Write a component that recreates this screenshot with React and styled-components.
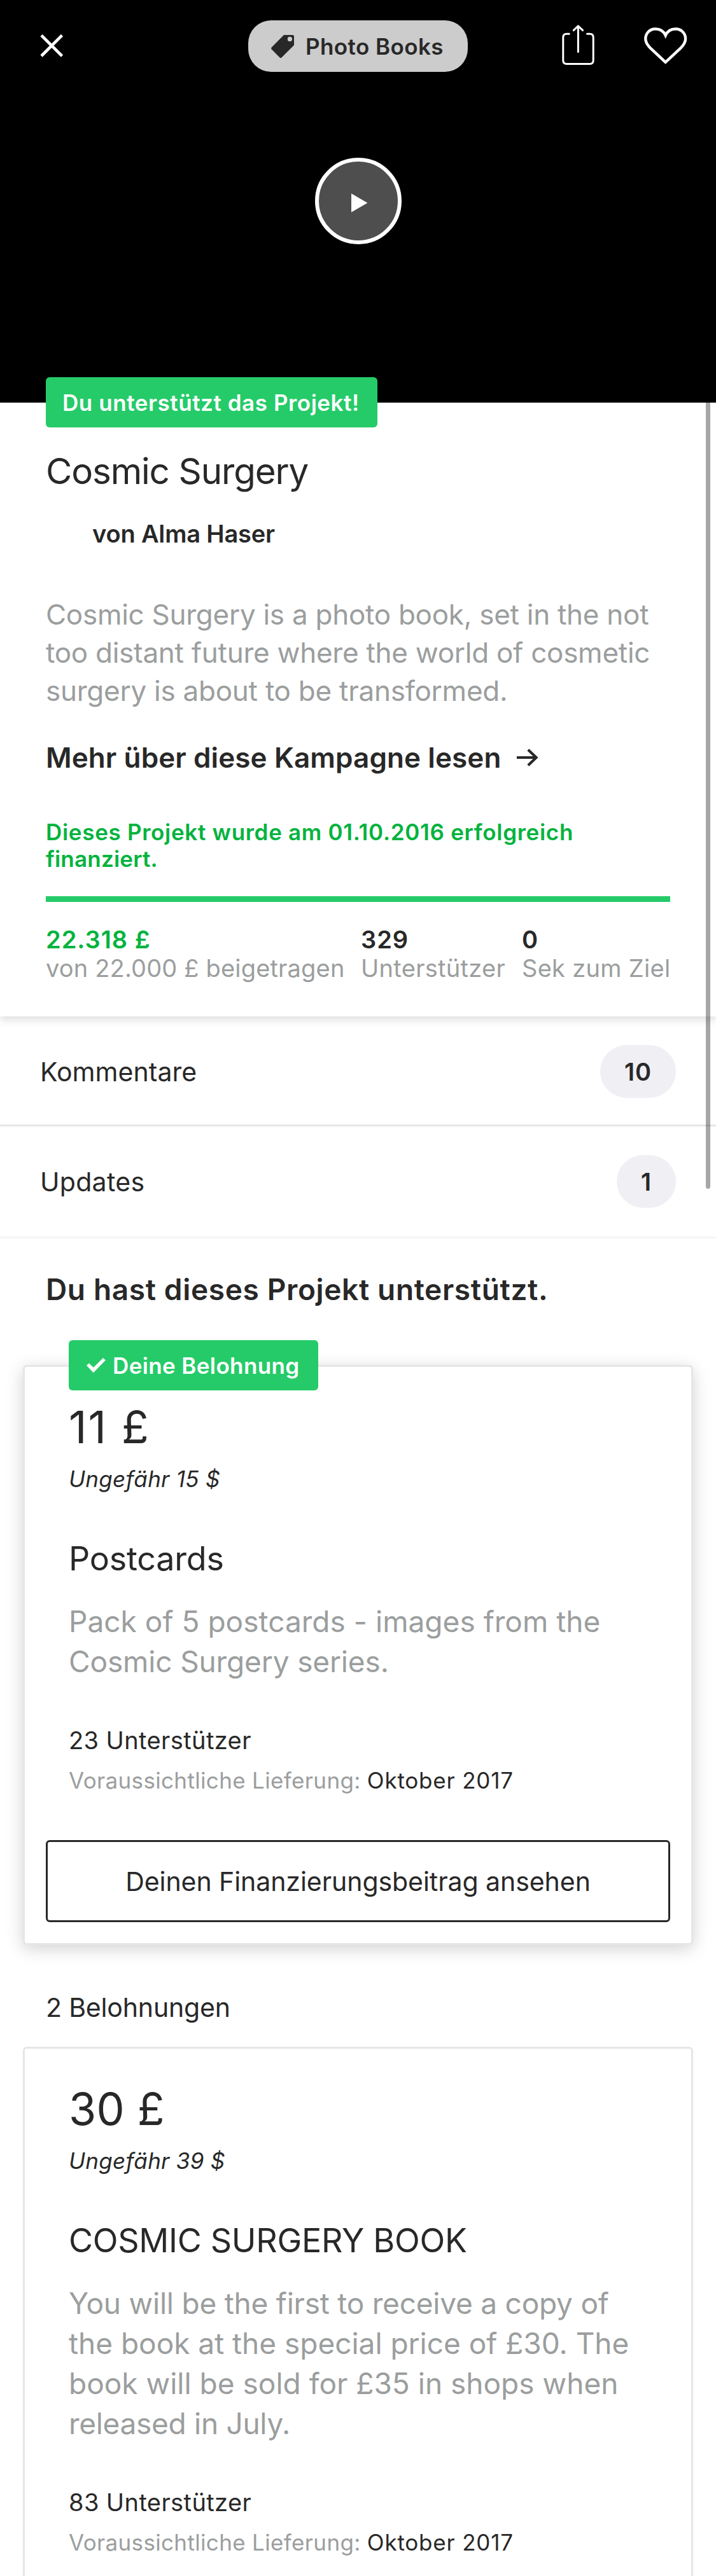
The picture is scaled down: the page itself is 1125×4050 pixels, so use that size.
import React from "react";
import styled, { createGlobalStyle } from "styled-components";

const ink = "#282828";
const muted = "#9b9e9e";
const green = "#25cb68";
const greenText = "#03b33e";
const rule = "#e6e6e6";

const GlobalStyle = createGlobalStyle`
  *, *::before, *::after { box-sizing: border-box; }
  body {
    margin: 0;
    background: #fff;
    color: ${ink};
    font-family: Inter, "Liberation Sans", sans-serif;
  }
  h1, h2, h3, p { margin: 0; font-weight: 400; }
  button { font: inherit; color: inherit; border: 0; background: none; padding: 0; }
  svg { display: block; flex: none; }
`;

const Page = styled.main`
  position: relative;
  width: 1125px;
  height: 4050px;
  overflow: hidden;
  background: #fff;
`;

const ScrollThumb = styled.div`
  position: absolute;
  z-index: 5;
  top: 600px;
  right: 9px;
  width: 7px;
  height: 1269px;
  border-radius: 4px;
  background: rgba(0, 0, 0, 0.35);
`;

/* Hero */
const Hero = styled.header`
  display: flex;
  flex-direction: column;
  height: 633px;
  background: #000;
`;

const TopBar = styled.nav`
  display: grid;
  grid-template-columns: 1fr auto 1fr;
  align-items: center;
  height: 113px;
  padding: 32px 45px 0 63px;
`;

const CloseButton = styled.button`
  justify-self: start;
`;

const Category = styled.div`
  display: flex;
  align-items: center;
  gap: 18px;
  width: 345px;
  height: 81px;
  margin-left: -18px;
  padding-left: 36px;
  border-radius: 36px;
  background: #ccc;
  font-size: 35px;
  font-weight: 600;
  letter-spacing: 0.42px;
  white-space: nowrap;
`;

const Actions = styled.div`
  display: flex;
  justify-content: flex-end;
  align-items: center;
  gap: 77px;
`;

const PlayButton = styled.button`
  align-self: center;
  width: 136px;
  height: 136px;
  margin-top: 135px;
  border: 6px solid #fff;
  border-radius: 50%;
  background: #4e4e4e;
`;

/* Shared */
const Badge = styled.div`
  display: flex;
  align-items: center;
  gap: 11px;
  height: 79px;
  border-radius: 6px;
  background: ${green};
  color: #fff;
  font-size: 35px;
  font-weight: 600;
  white-space: nowrap;
`;

const Line = styled.span`
  display: block;
  white-space: nowrap;
  letter-spacing: ${(p) => p.$track || 0}px;
`;

/* Project info */
const Info = styled.section`
  display: flow-root;
  position: relative;
  z-index: 1;
  height: 965px;
  padding: 0 72px;
  background: #fff;
  box-shadow: 0 6px 12px rgba(0, 0, 0, 0.13);
`;

const BackedBadge = styled(Badge)`
  width: 521px;
  margin-top: -40px;
  padding-left: 26px;
  letter-spacing: 0.56px;
`;

const Title = styled.h1`
  margin-top: 34px;
  font-size: 56.5px;
  line-height: 70px;
  letter-spacing: -1.11px;
`;

const Author = styled.p`
  margin-top: 40px;
  padding-left: 73px;
  font-size: 38px;
  font-weight: 600;
  line-height: 46px;
  letter-spacing: -0.17px;
`;

const Blurb = styled.p`
  margin-top: 74px;
  color: ${muted};
  font-size: 44px;
  line-height: 60px;
`;

const MoreLink = styled.p`
  display: flex;
  align-items: center;
  gap: 24px;
  margin-top: 48px;
  font-size: 44px;
  font-weight: 600;
  line-height: 54px;
  letter-spacing: 0.1px;
`;

const Status = styled.p`
  margin-top: 69px;
  color: ${greenText};
  font-size: 35px;
  font-weight: 600;
  line-height: 42px;
`;

const Progress = styled.div`
  height: 9px;
  margin-top: 38px;
  background: ${green};
`;

const Stats = styled.div`
  display: grid;
  grid-template-columns: 495px 253px auto;
  margin-top: 36px;
  font-size: 38px;
  white-space: nowrap;
`;

const StatValue = styled.div`
  color: ${(p) => (p.$green ? greenText : ink)};
  font-weight: 600;
  line-height: 46px;
  letter-spacing: 1px;
`;

const StatLabel = styled.div`
  color: ${muted};
  line-height: 45px;
  letter-spacing: ${(p) => p.$track}px;
`;

/* Link rows */
const Row = styled.div`
  display: flex;
  justify-content: space-between;
  align-items: center;
  padding: 45px 63px ${(p) => p.$bottom}px;
  border-bottom: 3px solid ${(p) => p.$line};
  font-size: 41px;
`;

const Count = styled.span`
  display: flex;
  justify-content: center;
  align-items: center;
  min-width: 92px;
  height: 83px;
  padding: 0 38px;
  border-radius: 42px;
  background: #efeff4;
  font-size: 38px;
  font-weight: 600;
  letter-spacing: 0.9px;
`;

/* Rewards */
const Rewards = styled.section`
  display: flow-root;
`;

const Heading = styled.h2`
  margin: 52px 72px 0;
  font-size: 46px;
  font-weight: 600;
  line-height: 56px;
  letter-spacing: 0.65px;
`;

const Subheading = styled.p`
  margin: 73px 72px 37px;
  font-size: 41px;
  line-height: 50px;
  letter-spacing: -0.17px;
`;

const Card = styled.article`
  position: relative;
  display: flow-root;
  margin: ${(p) => (p.$raised ? "91px" : "0")} 36px 0;
  padding: 52px 33px ${(p) => (p.$raised ? 33 : 72)}px;
  border: 3px solid ${rule};
  border-radius: 6px;
  background: #fff;
  box-shadow: ${(p) => (p.$raised ? "0 6px 27px rgba(0, 0, 0, 0.18)" : "none")};
`;

const RewardBadge = styled(Badge)`
  position: absolute;
  top: -42px;
  left: 69px;
  width: 392px;
  padding-left: 28px;
  letter-spacing: 0.38px;
`;

const CardBody = styled.div`
  padding: 0 36px;
`;

const Price = styled.p`
  font-size: 70px;
  line-height: 85px;
  letter-spacing: ${(p) => p.$track}px;
`;

const Approx = styled.p`
  margin-top: 18px;
  font-size: 35px;
  font-style: italic;
  line-height: 42px;
  letter-spacing: 0.3px;
`;

const RewardTitle = styled.h3`
  margin-top: 73px;
  font-size: 52px;
  line-height: 64px;
  letter-spacing: ${(p) => p.$track}px;
`;

const RewardText = styled.p`
  margin-top: 35px;
  color: ${muted};
  font-size: 46px;
  line-height: 63px;
`;

const Backers = styled.p`
  margin-top: 69px;
  font-size: 38px;
  line-height: 46px;
  letter-spacing: 0.4px;
`;

const Delivery = styled.p`
  margin-top: 19px;
  color: ${muted};
  font-size: 35px;
  line-height: 42px;
  letter-spacing: 0.34px;
  white-space: nowrap;

  span {
    color: ${ink};
    letter-spacing: 0.81px;
  }
`;

const PledgeButton = styled.button`
  display: flex;
  justify-content: center;
  align-items: center;
  width: 100%;
  height: 129px;
  margin-top: 73px;
  border: 3px solid ${ink};
  border-radius: 6px;
  font-size: 41px;
  letter-spacing: -0.06px;
`;

const CloseIcon = () => (
  <svg width="36" height="37" viewBox="0 0 36 37" fill="none" stroke="#fff" strokeWidth="4.6">
    <path d="M2 1.5L34.5 34M34.5 1.5L2 34" />
  </svg>
);

const TagIcon = () => (
  <svg width="36" height="36" viewBox="0 0 36 36">
    <path fill={ink} d="M20 0H33.5Q36 0 36 2.5V16L16.4 35.4Q15 36.6 13.6 35.4L.7 22.5Q-.5 21 .7 19.6Z" />
    <circle cx="29.4" cy="6.4" r="3.6" fill="#ccc" />
  </svg>
);

const ShareIcon = () => (
  <svg width="54" height="69" viewBox="0 0 54 69" fill="none" stroke="#fff" strokeWidth="3" strokeLinecap="round" strokeLinejoin="round">
    <path d="M13.3 15.3H9.5Q3.8 15.3 3.8 21V57Q3.8 62.5 9.5 62.5H45.6Q51.2 62.5 51.2 57V21Q51.2 15.3 45.6 15.3H41.5" />
    <path d="M27.4 3V43.5M20.3 9.7L27.4 2.8L34.6 9.7" />
  </svg>
);

const HeartIcon = () => (
  <svg width="68" height="60" viewBox="0 0 68 60" fill="none" stroke="#fff" strokeWidth="4.4">
    <path d="M33.7 54.8L10.5 33.2C5 27.8 2.3 23.2 2.3 18C2.3 9.2 9 2.5 17.8 2.5C25.2 2.5 31 6.6 33.7 12.6C36.4 6.6 42.2 2.5 49.6 2.5C58.4 2.5 65.1 9.2 65.1 18C65.1 23.2 62.4 27.8 56.9 33.2Z" />
  </svg>
);

const PlayIcon = () => (
  <svg width="124" height="124" viewBox="0 0 124 124" fill="#fff">
    <path d="M51 50.2L76.4 65L51 79.8Z" />
  </svg>
);

const ArrowIcon = () => (
  <svg width="34" height="28" viewBox="0 0 34 28" fill="none" stroke={ink} strokeWidth="4.2">
    <path d="M0 14H31M17.8 1.8L30.6 14L17.8 26.2" />
  </svg>
);

const CheckIcon = () => (
  <svg width="30" height="24" viewBox="0 0 30 24" fill="#fff">
    <path d="M0 11.8L3.8 8.2L10.8 15L26 0L29.8 3.4L10.8 23.2Z" />
  </svg>
);

const rewards = [
  {
    price: "11 £",
    priceTrack: 2.1,
    approx: "Ungefähr 15 $",
    title: "Postcards",
    titleTrack: -0.2,
    text: [
      ["Pack of 5 postcards - images from the", 0.03],
      ["Cosmic Surgery series.", -0.14],
    ],
    backers: "23 Unterstützer",
    mine: true,
  },
  {
    price: "30 £",
    priceTrack: 0.24,
    approx: "Ungefähr 39 $",
    title: "COSMIC SURGERY BOOK",
    titleTrack: -0.27,
    text: [
      ["You will be the first to receive a copy of", -0.22],
      ["the book at the special price of £30. The", -0.02],
      ["book will be sold for £35 in shops when", 0.01],
      ["released in July.", -0.3],
    ],
    backers: "83 Unterstützer",
    mine: false,
  },
];

function Reward({ reward }) {
  return (
    <Card $raised={reward.mine}>
      {reward.mine && (
        <RewardBadge>
          <CheckIcon />
          Deine Belohnung
        </RewardBadge>
      )}
      <CardBody>
        <Price $track={reward.priceTrack}>{reward.price}</Price>
        <Approx>{reward.approx}</Approx>
        <RewardTitle $track={reward.titleTrack}>{reward.title}</RewardTitle>
        <RewardText>
          {reward.text.map(([line, track]) => (
            <Line key={line} $track={track}>{line}</Line>
          ))}
        </RewardText>
        <Backers>{reward.backers}</Backers>
        <Delivery>
          Voraussichtliche Lieferung: <span>Oktober 2017</span>
        </Delivery>
      </CardBody>
      {reward.mine && <PledgeButton>Deinen Finanzierungsbeitrag ansehen</PledgeButton>}
    </Card>
  );
}

export default function App() {
  return (
    <>
      <GlobalStyle />
      <Page>
        <Hero>
          <TopBar>
            <CloseButton aria-label="Schließen"><CloseIcon /></CloseButton>
            <Category>
              <TagIcon />
              Photo Books
            </Category>
            <Actions>
              <ShareIcon />
              <HeartIcon />
            </Actions>
          </TopBar>
          <PlayButton aria-label="Abspielen"><PlayIcon /></PlayButton>
        </Hero>

        <Info>
          <BackedBadge>Du unterstützt das Projekt!</BackedBadge>
          <Title>Cosmic Surgery</Title>
          <Author>von Alma Haser</Author>
          <Blurb>
            <Line $track={-0.27}>Cosmic Surgery is a photo book, set in the not</Line>
            <Line $track={-0.27}>too distant future where the world of cosmetic</Line>
            <Line $track={-0.25}>surgery is about to be transformed.</Line>
          </Blurb>
          <MoreLink>
            Mehr über diese Kampagne lesen
            <ArrowIcon />
          </MoreLink>
          <Status>
            <Line $track={0.7}>Dieses Projekt wurde am 01.10.2016 erfolgreich</Line>
            <Line $track={0.2}>finanziert.</Line>
          </Status>
          <Progress />
          <Stats>
            <div>
              <StatValue $green>22.318 £</StatValue>
              <StatLabel $track={0.17}>von 22.000 £ beigetragen</StatLabel>
            </div>
            <div>
              <StatValue>329</StatValue>
              <StatLabel $track={0.3}>Unterstützer</StatLabel>
            </div>
            <div>
              <StatValue>0</StatValue>
              <StatLabel $track={0.29}>Sek zum Ziel</StatLabel>
            </div>
          </Stats>
        </Info>

        <Row $bottom={42} $line={rule}>
          <Line $track={0.05}>Kommentare</Line>
          <Count>10</Count>
        </Row>
        <Row $bottom={45} $line="#f5f5f5">
          <Line $track={0.3}>Updates</Line>
          <Count>1</Count>
        </Row>

        <Rewards>
          <Heading>Du hast dieses Projekt unterstützt.</Heading>
          <Reward reward={rewards[0]} />
          <Subheading>2 Belohnungen</Subheading>
          <Reward reward={rewards[1]} />
        </Rewards>

        <ScrollThumb />
      </Page>
    </>
  );
}
